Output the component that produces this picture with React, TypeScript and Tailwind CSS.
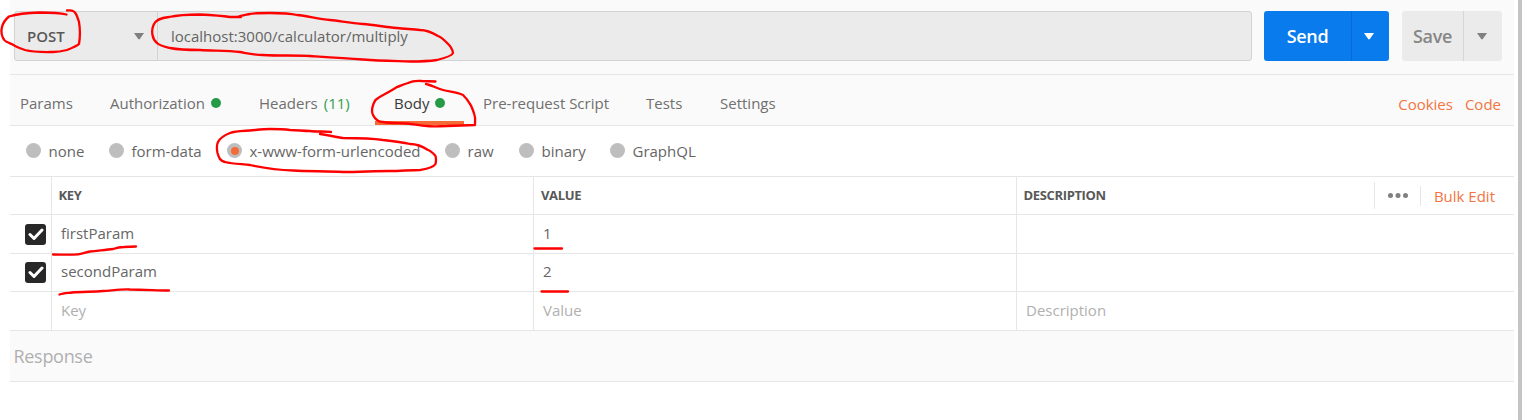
import type { ReactNode } from 'react';

function Caret({ className }: { className: string }) {
  return (
    <svg width="10" height="7" viewBox="0 0 10 7" className={className}>
      <path d="M0 0H10L5.8 6Q5 6.8 4.2 6Z" fill="currentColor" />
    </svg>
  );
}

function Dot() {
  return <span className="ml-[6px] h-[10px] w-[10px] rounded-full bg-[#259b48]" />;
}

function Tab({ width, children }: { width: string; children: ReactNode }) {
  return <div className={`flex shrink-0 items-center pb-px text-[#6f6f6f] ${width}`}>{children}</div>;
}

function BodyType({ label, width, selected }: { label: string; width: string; selected?: boolean }) {
  return (
    <label className={`flex shrink-0 items-center ${width}`}>
      <span className="flex h-[15px] w-[15px] items-center justify-center rounded-full bg-[#bebebe]">
        {selected && <span className="h-[8px] w-[8px] rounded-full bg-[#f46b38]" />}
      </span>
      <span className="ml-[7.5px]">{label}</span>
    </label>
  );
}

function Check() {
  return (
    <span className="ml-px flex h-[21px] w-[21px] items-center justify-center rounded-[3px] bg-[#282828]">
      <svg width="16" height="13" viewBox="0 0 16 13">
        <path d="M2 6.5L6 10.5L14 2" fill="none" stroke="white" strokeWidth="3" strokeLinecap="round" strokeLinejoin="round" />
      </svg>
    </span>
  );
}

const columns = 'grid grid-cols-[42px_482px_483px_1fr] border-b border-[#e6e6e6]';

function Row({ height, checked, values, muted }: { height: string; checked?: boolean; values: string[]; muted?: boolean }) {
  return (
    <div className={`${columns} ${height} ${muted ? 'text-[#b0b0b0]' : 'text-[#666666]'}`}>
      <div className="flex items-center border-r border-[#e6e6e6] pl-[14px]">{checked && <Check />}</div>
      <div className="flex items-center border-r border-[#e6e6e6] pb-[3px] pl-[9px]">{values[0]}</div>
      <div className="flex items-center border-r border-[#e6e6e6] pb-[3px] pl-[9px]">{values[1]}</div>
      <div className="flex items-center pb-[3px] pl-[9px]">{values[2]}</div>
    </div>
  );
}

const strokes = [
  'M66.5 14.5C60 13 50 12.5 40 12.5C28 12.8 15 14.5 9 16.5C6 19 3 23 2 27C0 35 4 41 7 42C10 43.5 13 44 15 46C19 48 22 49 25 50C34 52.5 45 52 53 52C59 52 63 51 67 50C72 48 77 46 79 44C80 38 80 28 79 22C77 16 76 12 73 11C71 10 69 10.5 67 10.5',
  'M241 17L230 17C220 15.5 210 15 200 14.5C188 14.5 178 15 169 17C159 18 155 21 153.500 25C151 31 152 39 157 43C160 46 166 47 170 48C180 50 190 50 200 50C213 51 227 50 240 52C246 53 254 55 263 55C280 56 295 55 310 56C327 57 345 58 363 59.500C380 61 395 61 410 61.500C420 61.500 430 61 437 60C445 58 452 56 453 53C453 50 451 48 450 46C446 42 443 38 438 36C433 33 427 30 420 30C412 29 405 29 397 28C385 27 375 25 363 24C350 23 340 21 330 20C318 19 308 16 297 15C288 13 279 13 270 13C260 13 254 13 250 14C245 15 241 15.500 237 17',
  'M435.500 81.500L422 81C416 80.500 412 81 408 83C404 84 400 86 397 87C392 90 389 92 385 94C381 96 378 98 375.500 100C372 105 371 112 373 115C375 119 378 122 383 122C391 123.500 399 123 407 123.500C414 124 420 126 427 126C433 127 440 126 447 126L475 125C475 120 475.500 118 474.500 115C473 110 472 107 470 104C468 100 466 98 463 95C456 92 450 92 443 90C436 88 431 85 426 84',
  'M331 132C324 131 317 132 310 131C303 131 297 130 290 130C283 129 276 129 270 129C263 129 256 130 250 130.500C243 131 235 131 230 133C225 135 220 138 218 142C216 146 217 150 217.500 153C219 158 220 161 225 162C233 164 242 164 250 165C264 168 278 170 293 170.500C310 171.500 327 171 343 172C359 172 375 171 390 171C400 171 410 170 420 170C426 169 433 168 435.500 164C436 162 436 158 435.500 156C433 153 431 151 428 150C422 146 416 144 410 144C401 142 392 141 383 140C370 138 356 138 343 138C336 137 327 135 320 134',
  'M53 254.500C62 254.500 70 255 78 254.300C82 254 86 252 90 251.500C98 250.500 106 250 113 249C116 248 120 247 124 247L136 246.500',
  'M59.500 294.500C63 293 68 293 72 292.500C82 291.500 93 292 103 291C112 290.500 121 289 130 289.500C144 289.500 158 290.500 169 290.500',
  'M534.500 248.500H562',
  'M541.500 291.500H568',
];

export default function App() {
  return (
    <div className="relative flex h-[420px] w-[1522px] justify-between overflow-hidden bg-white pl-[10px] font-['Open_Sans',sans-serif] text-[15px] leading-5 whitespace-nowrap">
      <main className="w-[1504px]">
        <div className="flex h-[75px] items-start border-b border-[#e6e6e6] bg-[#fafafa] pt-[11px] pl-[4px]">
          <div className="flex h-[50px] w-[1238px] rounded-[3px] border border-[#d2d2d2] bg-[#ebebeb]">
            <div className="flex w-[143px] items-center justify-between border-r border-[#d2d2d2] pr-[13px] pl-[12px]">
              <span className="text-[15px] font-semibold text-[#585858]">POST</span>
              <Caret className="text-[#808080]" />
            </div>
            <div className="flex items-center pl-[13px] text-[#646464]">localhost:3000/calculator/multiply</div>
          </div>
          <button className="ml-[12px] flex h-[50px] w-[125px] rounded-[3px] bg-[#097bed] text-white">
            <span className="flex h-full w-[88px] items-center justify-center border-r border-[#066cd3] text-[18px] font-semibold tracking-[-0.3px]">Send</span>
            <span className="flex h-full flex-1 items-center pl-[12px]"><Caret className="text-white" /></span>
          </button>
          <button className="ml-[13px] flex h-[50px] w-[100px] rounded-[3px] bg-[#ebebeb] text-[#868686]">
            <span className="flex h-full w-[62px] items-center justify-center border-r border-[#d6d6d6] text-[18px] font-semibold tracking-[-0.3px]">Save</span>
            <span className="flex h-full flex-1 items-center pl-[13px]"><Caret className="text-[#808080]" /></span>
          </button>
        </div>

        <nav className="flex h-[51px] border-b border-[#e6e6e6] bg-[#fafafa] pt-[7px] pl-[10px]">
          <Tab width="w-[90px]">Params</Tab>
          <Tab width="w-[149px]">Authorization<Dot /></Tab>
          <Tab width="w-[116px]">Headers<span className="ml-[6px] text-[#2fa050]">(11)</span></Tab>
          <div className="mr-[19px] flex w-[89px] flex-col">
            <div className="flex h-[39px] items-center pl-[19px] pt-[3px] text-[#383838]">Body<Dot /></div>
            <div className="h-[4px] bg-[#f46b38]" />
          </div>
          <Tab width="w-[163px]">Pre-request Script</Tab>
          <Tab width="w-[74px]">Tests</Tab>
          <Tab width="w-[56px]">Settings</Tab>
          <div className="ml-auto flex items-center gap-[12px] pr-[13px] text-[#f4743f]">
            <span>Cookies</span>
            <span>Code</span>
          </div>
        </nav>

        <div className="flex h-[51px] items-center border-b border-[#e6e6e6] pb-px pl-[16px] text-[#666666]">
          <BodyType label="none" width="w-[83px]" />
          <BodyType label="form-data" width="w-[118px]" />
          <BodyType label="x-www-form-urlencoded" width="w-[218px]" selected />
          <BodyType label="raw" width="w-[74px]" />
          <BodyType label="binary" width="w-[91px]" />
          <BodyType label="GraphQL" width="w-[90px]" />
        </div>

        <section>
          <div className={`${columns} h-[38px] text-[13px] font-bold tracking-[-0.35px] text-[#585858]`}>
            <div className="border-r border-[#e6e6e6]" />
            <div className="flex items-center border-r border-[#e6e6e6] pb-[2px] pl-[6.5px]">KEY</div>
            <div className="flex items-center border-r border-[#e6e6e6] pb-[2px] pl-[7px]">VALUE</div>
            <div className="flex items-center pl-[6.5px]">
              <span className="pb-[2px]">DESCRIPTION</span>
              <div className="ml-auto flex h-[27px] items-center border-l border-[#e6e6e6] pl-[13px]">
                <svg width="20" height="5" viewBox="0 0 20 5" fill="#808080">
                  <circle cx="2.500" cy="2.500" r="2.500" />
                  <circle cx="10" cy="2.500" r="2.500" />
                  <circle cx="17.500" cy="2.500" r="2.500" />
                </svg>
                <div className="ml-[12px] h-5 border-l border-[#e6e6e6]" />
              </div>
              <span className="pr-[19px] pl-[13px] text-[15px] font-normal tracking-normal text-[#f4743f]">Bulk Edit</span>
            </div>
          </div>
          <Row height="h-[39px]" checked values={['firstParam', '1', '']} />
          <Row height="h-[38px]" checked values={['secondParam', '2', '']} />
          <Row height="h-[39px]" muted values={['Key', 'Value', 'Description']} />
        </section>

        <footer className="flex h-[51px] items-center border-b border-[#e6e6e6] bg-[#fafafa] pl-[3.5px] text-[18px] tracking-[-0.3px] text-[#b0b0b0]">Response</footer>
      </main>

      <div className="w-[4px] bg-[#c4c4c4]" />

      <svg width="1522" height="420" viewBox="0 0 1522 420" className="pointer-events-none absolute inset-0" fill="none" stroke="#ff0000" strokeWidth="2.300" strokeLinecap="round" strokeLinejoin="round">
        {strokes.map((d) => <path key={d} d={d} />)}
      </svg>
    </div>
  );
}
